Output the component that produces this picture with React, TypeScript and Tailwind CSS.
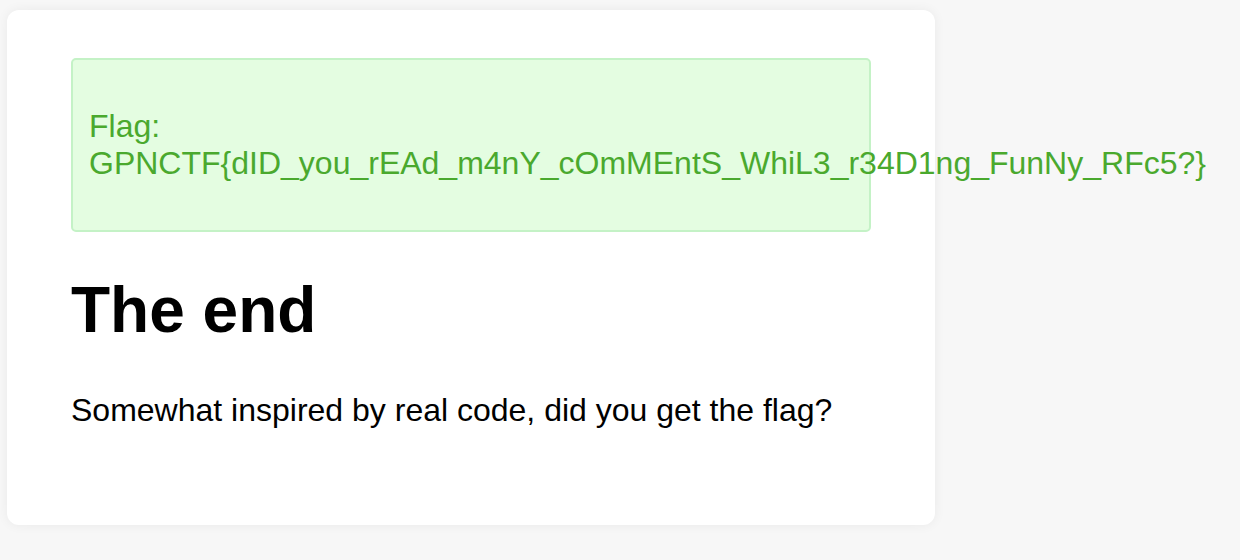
import React from 'react';

const flag = 'GPNCTF{dID_you_rEAd_m4nY_cOmMEntS_WhiL3_r34D1ng_FunNy_RFc5?}';

function App() {
  return (
    <div className="min-h-screen w-full bg-[#f7f7f7] pt-[10px] pl-[7px] font-['Liberation_Sans',Arial,sans-serif] text-black">
      <div className="w-[928px] rounded-[12px] bg-white px-[64px] pt-[48px] pb-[96px] shadow-[0_0_12px_rgba(0,0,0,0.06)]">
        <div className="w-[800px] rounded-[5px] border-2 border-[#c4f2c6] bg-[#e4fde1] px-[16px] py-[16px]">
          <p className="my-[32px] text-[32px] leading-[36.8px] text-[#4aa92e]">
            Flag: {flag}
          </p>
        </div>
        <h1 className="mt-[42px] text-[64px] font-bold leading-[73.6px]">The end</h1>
        <p className="mt-[45px] text-[32px] leading-[36.8px]">
          Somewhat inspired by real code, did you get the flag?
        </p>
      </div>
    </div>
  );
}

export default App;
